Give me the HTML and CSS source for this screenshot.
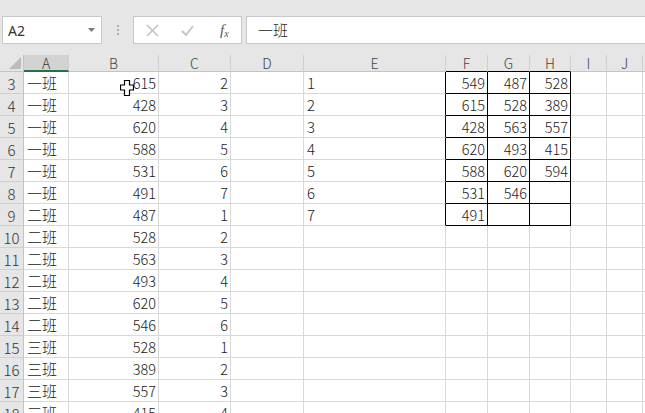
FILE: index.html
```html
<!DOCTYPE html>
<html>
<head>
<meta charset="utf-8">
<link rel="stylesheet" href="styles.css">
</head>
<body>
<div class="top">
  <div class="fbar">
    <div class="namebox"><span class="ref">A2</span><svg class="dd" width="7" height="4" viewBox="0 0 7 4"><polygon points="0,0 7,0 3.5,4" fill="#7a7a7a"/></svg></div>
    <div class="sep"><i></i><i></i><i></i></div>
    <div class="btns">
      <svg class="ic" width="13" height="13" viewBox="0 0 13 13"><path d="M1 1 L12 12 M12 1 L1 12" stroke="#c2c2c2" stroke-width="1.6" fill="none"/></svg>
      <svg class="ic" width="13" height="13" viewBox="0 0 13 13"><path d="M1 7 L5 11 L12 2" stroke="#c2c2c2" stroke-width="1.8" fill="none"/></svg>
      <span class="fx">f<sub>x</sub></span>
    </div>
    <div class="finput">一班</div>
  </div>
</div>
<div class="sheet">
  <div class="corner"><svg width="12" height="12" viewBox="0 0 12 12"><polygon points="12,0 12,12 0,12" fill="#bcbcbc"/></svg></div>
  <div class="ch sel">A</div><div class="ch">B</div><div class="ch">C</div><div class="ch">D</div><div class="ch">E</div><div class="ch bk">F</div><div class="ch bk">G</div><div class="ch bk">H</div><div class="ch">I</div><div class="ch">J</div><div class="ch"></div>

  <div class="rh">3</div><div class="c t">一班</div><div class="c n">615</div><div class="c n">2</div><div class="c"></div><div class="c t br">1</div><div class="c n b">549</div><div class="c n b">487</div><div class="c n b">528</div><div class="c"></div><div class="c"></div><div class="c"></div>
  <div class="rh">4</div><div class="c t">一班</div><div class="c n">428</div><div class="c n">3</div><div class="c"></div><div class="c t br">2</div><div class="c n b">615</div><div class="c n b">528</div><div class="c n b">389</div><div class="c"></div><div class="c"></div><div class="c"></div>
  <div class="rh">5</div><div class="c t">一班</div><div class="c n">620</div><div class="c n">4</div><div class="c"></div><div class="c t br">3</div><div class="c n b">428</div><div class="c n b">563</div><div class="c n b">557</div><div class="c"></div><div class="c"></div><div class="c"></div>
  <div class="rh">6</div><div class="c t">一班</div><div class="c n">588</div><div class="c n">5</div><div class="c"></div><div class="c t br">4</div><div class="c n b">620</div><div class="c n b">493</div><div class="c n b">415</div><div class="c"></div><div class="c"></div><div class="c"></div>
  <div class="rh">7</div><div class="c t">一班</div><div class="c n">531</div><div class="c n">6</div><div class="c"></div><div class="c t br">5</div><div class="c n b">588</div><div class="c n b">620</div><div class="c n b">594</div><div class="c"></div><div class="c"></div><div class="c"></div>
  <div class="rh">8</div><div class="c t">一班</div><div class="c n">491</div><div class="c n">7</div><div class="c"></div><div class="c t br">6</div><div class="c n b">531</div><div class="c n b">546</div><div class="c n b"></div><div class="c"></div><div class="c"></div><div class="c"></div>
  <div class="rh">9</div><div class="c t">二班</div><div class="c n">487</div><div class="c n">1</div><div class="c"></div><div class="c t br">7</div><div class="c n b">491</div><div class="c n b"></div><div class="c n b"></div><div class="c"></div><div class="c"></div><div class="c"></div>
  <div class="rh">10</div><div class="c t">二班</div><div class="c n">528</div><div class="c n">2</div><div class="c"></div><div class="c"></div><div class="c"></div><div class="c"></div><div class="c"></div><div class="c"></div><div class="c"></div><div class="c"></div>
  <div class="rh">11</div><div class="c t">二班</div><div class="c n">563</div><div class="c n">3</div><div class="c"></div><div class="c"></div><div class="c"></div><div class="c"></div><div class="c"></div><div class="c"></div><div class="c"></div><div class="c"></div>
  <div class="rh">12</div><div class="c t">二班</div><div class="c n">493</div><div class="c n">4</div><div class="c"></div><div class="c"></div><div class="c"></div><div class="c"></div><div class="c"></div><div class="c"></div><div class="c"></div><div class="c"></div>
  <div class="rh">13</div><div class="c t">二班</div><div class="c n">620</div><div class="c n">5</div><div class="c"></div><div class="c"></div><div class="c"></div><div class="c"></div><div class="c"></div><div class="c"></div><div class="c"></div><div class="c"></div>
  <div class="rh">14</div><div class="c t">二班</div><div class="c n">546</div><div class="c n">6</div><div class="c"></div><div class="c"></div><div class="c"></div><div class="c"></div><div class="c"></div><div class="c"></div><div class="c"></div><div class="c"></div>
  <div class="rh">15</div><div class="c t">三班</div><div class="c n">528</div><div class="c n">1</div><div class="c"></div><div class="c"></div><div class="c"></div><div class="c"></div><div class="c"></div><div class="c"></div><div class="c"></div><div class="c"></div>
  <div class="rh">16</div><div class="c t">三班</div><div class="c n">389</div><div class="c n">2</div><div class="c"></div><div class="c"></div><div class="c"></div><div class="c"></div><div class="c"></div><div class="c"></div><div class="c"></div><div class="c"></div>
  <div class="rh">17</div><div class="c t">三班</div><div class="c n">557</div><div class="c n">3</div><div class="c"></div><div class="c"></div><div class="c"></div><div class="c"></div><div class="c"></div><div class="c"></div><div class="c"></div><div class="c"></div>
  <div class="rh">18</div><div class="c t">三班</div><div class="c n">415</div><div class="c n">4</div><div class="c"></div><div class="c"></div><div class="c"></div><div class="c"></div><div class="c"></div><div class="c"></div><div class="c"></div><div class="c"></div>

  <svg class="cursor" width="14" height="16" viewBox="0 0 14 16"><path d="M4.5 0.5 H9.5 V5 H13.5 V10 H9.5 V15.5 H4.5 V10 H0.5 V5 H4.5 Z" fill="#fff" stroke="#000" stroke-width="1.2"/></svg>
</div>
</body>
</html>
```
FILE: styles.css
```css
html, body {
  margin: 0;
  padding: 0;
  background: #fff;
  width: 645px;
  height: 413px;
  overflow: hidden;
  font-family: "Noto Sans CJK SC", "Noto Sans", sans-serif;
}
.top {
  background: #e6e6e6;
  height: 55px;
  padding-top: 16px;
  box-sizing: border-box;
}
.fbar {
  display: flex;
  height: 28px;
  padding-left: 2px;
}
.namebox {
  width: 100px;
  box-sizing: border-box;
  background: #fff;
  border: 1px solid #c8c8c8;
  display: flex;
  align-items: center;
  justify-content: space-between;
  padding: 0 6px 0 5px;
}
.ref {
  font-family: "Noto Sans", "Liberation Sans", sans-serif;
  font-size: 14px;
  color: #333;
}
.sep {
  width: 31px;
  display: flex;
  flex-direction: column;
  align-items: center;
  justify-content: center;
  gap: 2px;
}
.sep i {
  display: block;
  width: 2px;
  height: 2px;
  background: #b0b0b0;
}
.btns {
  width: 109px;
  box-sizing: border-box;
  background: #fff;
  border: 1px solid #c8c8c8;
  display: flex;
  align-items: center;
  padding-left: 12px;
  gap: 22px;
}
.fx {
  font-family: "Liberation Serif", serif;
  font-style: italic;
  font-size: 15px;
  color: #555;
  margin-left: 4px;
}
.fx sub {
  font-size: 10px;
  vertical-align: 0;
  position: relative;
  top: 2px;
}
.finput {
  flex: 1;
  margin-left: 4px;
  margin-right: -4px;
  background: #fff;
  border: 1px solid #c8c8c8;
  font-size: 15px;
  font-weight: 300;
  color: #222;
  line-height: 25px;
  padding-left: 11px;
}
.sheet {
  position: relative;
  display: grid;
  grid-template-columns: 24px 45px 90px 72px 73px 142px 42px 42px 41px 36px 36px 10px;
  grid-template-rows: 17px;
  grid-auto-rows: 22px;
}
.corner {
  background: #e6e6e6;
  border-right: 1px solid #c4c4c4;
  border-bottom: 1px solid #c4c4c4;
  box-sizing: border-box;
  display: flex;
  align-items: flex-end;
  justify-content: flex-end;
  padding: 0 2px 2px 0;
}
.ch {
  background: #e6e6e6;
  border-right: 1px solid #cfcfcf;
  border-bottom: 1px solid #c4c4c4;
  box-sizing: border-box;
  text-align: center;
  font-family: "Noto Sans CJK SC", "Noto Sans", sans-serif;
  font-weight: 300;
  font-size: 14px;
  line-height: 16px;
  color: #444;
}
.ch.sel {
  background: #d3d3d3;
  border-bottom: 2px solid #217346;
  color: #333;
}
.ch.bk {
  border-bottom-color: #000;
}
.rh {
  background: #e6e6e6;
  border-right: 1px solid #c4c4c4;
  border-bottom: 1px solid #cfcfcf;
  box-sizing: border-box;
  text-align: center;
  font-family: "Noto Sans CJK SC", "Noto Sans", sans-serif;
  font-weight: 300;
  font-size: 15px;
  line-height: 23px;
  color: #333;
}
.c {
  border-right: 1px solid #d9d9d9;
  border-bottom: 1px solid #d9d9d9;
  box-sizing: border-box;
  font-size: 14.5px;
  font-weight: 300;
  line-height: 22px;
  color: #222;
  white-space: nowrap;
  overflow: hidden;
}
.c.t {
  padding-left: 3px;
  font-size: 15px;
}
.c.n {
  text-align: right;
  padding-right: 2px;
}
.c.b {
  border-right-color: #000;
  border-bottom-color: #000;
}
.c.br {
  border-right-color: #000;
}
.cursor {
  position: absolute;
  left: 120px;
  top: 25px;
}
```
